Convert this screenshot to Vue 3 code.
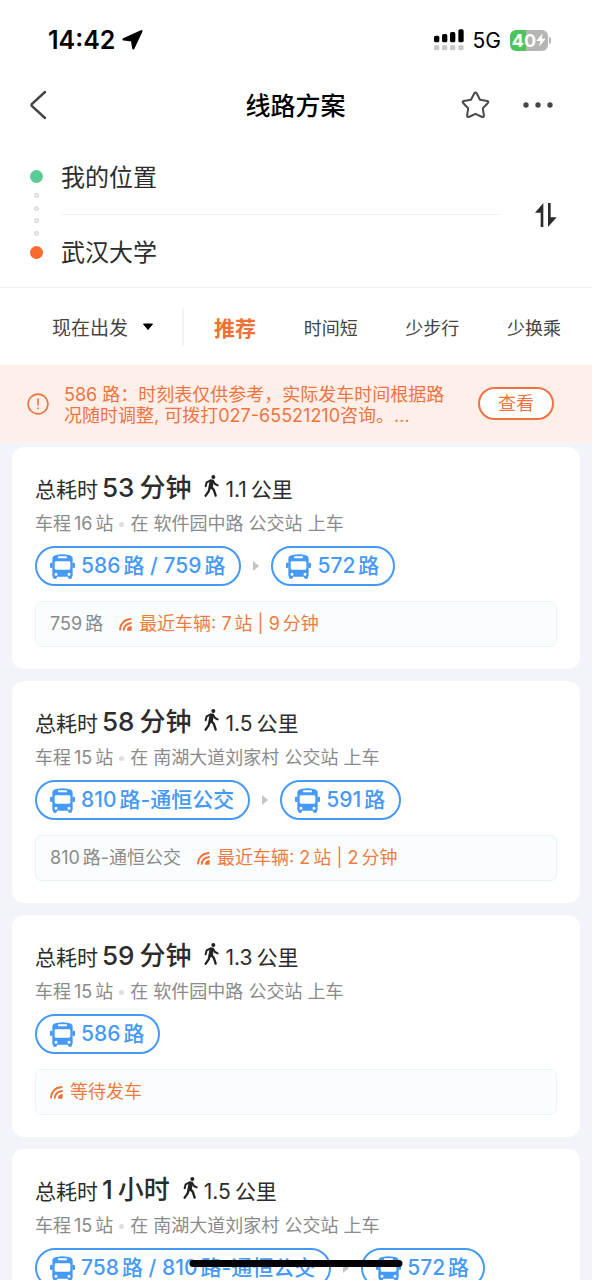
<script setup>
import { ref, h } from 'vue'

const origin = ref('我的位置')
const destination = ref('武汉大学')
const departure = ref('now')
const activeTab = ref('推荐')
const tabs = ['推荐', '时间短', '少步行', '少换乘']

const plans = [
  {
    duration: '53分钟', walk: '1.1公里', stops: '车程16站', board: '在 软件园中路 公交站 上车',
    lines: ['586路 / 759路', '572路'], next: '759路', status: '最近车辆: 7站 | 9分钟'
  },
  {
    duration: '58分钟', walk: '1.5公里', stops: '车程15站', board: '在 南湖大道刘家村 公交站 上车',
    lines: ['810路-通恒公交', '591路'], next: '810路-通恒公交', status: '最近车辆: 2站 | 2分钟'
  },
  {
    duration: '59分钟', walk: '1.3公里', stops: '车程15站', board: '在 软件园中路 公交站 上车',
    lines: ['586路'], next: '', status: '等待发车'
  },
  {
    duration: '1小时', walk: '1.5公里', stops: '车程15站', board: '在 南湖大道刘家村 公交站 上车',
    lines: ['758路 / 810路-通恒公交', '572路'], next: '', status: ''
  }
]

function swap() {
  const from = origin.value
  origin.value = destination.value
  destination.value = from
}

// Sets numerals apart from the Chinese characters next to them.
const Mixed = (props) =>
  h('span', { class: 'mixed' }, props.text.split(/([0-9.]+)/).filter(Boolean).map((part, i, all) => {
    const isNumber = /^[0-9.]+$/.test(part)
    const after = isNumber && /^[\u4e00-\u9fff]/.test(all[i + 1] || '')
    const before = isNumber && /[\u4e00-\u9fff]$/.test(all[i - 1] || '')
    return h('span', { class: { 'gap-after': after, 'gap-before': before } }, part)
  }))
Mixed.props = ['text']
</script>

<template>
  <div class="screen">
    <header class="status">
      <div class="clock">
        <span>14:42</span>
        <svg width="21" height="20" viewBox="0 0 63 60" aria-hidden="true">
          <path d="M58 4 34 55 30 31 5 28Z" stroke="#000" stroke-width="7" stroke-linejoin="round" />
        </svg>
      </div>
      <div class="signals">
        <svg width="30" height="22" viewBox="0 0 90 66" aria-hidden="true">
          <rect x="0" y="20" width="16" height="20" rx="5" /><rect x="24" y="15" width="16" height="25" rx="5" />
          <rect x="48" y="9" width="16" height="31" rx="5" /><rect x="73" y="1" width="16" height="39" rx="5" />
          <g fill="#c9c9c9">
            <rect x="0" y="48" width="16" height="16" rx="5" /><rect x="24" y="48" width="16" height="16" rx="5" />
            <rect x="48" y="48" width="16" height="16" rx="5" /><rect x="73" y="48" width="16" height="16" rx="5" />
          </g>
        </svg>
        <span class="network">5G</span>
        <div class="battery">
          <span>40</span>
          <svg width="10" height="14" viewBox="0 0 30 42" aria-hidden="true"><path fill="#fff" d="M20 1 1 24H13L9 41 29 17H17Z" /></svg>
        </div>
      </div>
    </header>

    <nav class="nav">
      <button class="icon-btn back" aria-label="返回">
        <svg width="18" height="30" viewBox="0 0 18 30"><path d="M16 2 2.8 14Q2 15 2.8 16L16 28" fill="none" stroke="#444" stroke-width="2.4" stroke-linecap="round" /></svg>
      </button>
      <h1>线路方案</h1>
      <div class="nav-actions">
        <button class="icon-btn" aria-label="收藏">
          <svg width="29" height="28" viewBox="0 0 29 28"><path d="M13.3 2.3Q14.5.7 15.7 2.3L19 8.8 26.2 10Q28 10.5 26.9 12L21.8 17.2 22.9 24.7Q22.9 26.5 21.2 26L14.5 22.8 7.8 26Q6.1 26.5 6.1 24.7L7.2 17.2 2.1 12Q1 10.5 2.8 10L10 8.8Z" fill="none" stroke="#4a4a4a" stroke-width="2" stroke-linejoin="round" /></svg>
        </button>
        <button class="icon-btn" aria-label="更多">
          <svg width="30" height="8" viewBox="0 0 30 8" fill="#484848"><circle cx="3" cy="4" r="2.7" /><circle cx="15" cy="4" r="2.7" /><circle cx="27" cy="4" r="2.7" /></svg>
        </button>
      </div>
    </nav>

    <form class="route" @submit.prevent>
      <div class="rail" aria-hidden="true">
        <i class="end start"></i><i></i><i></i><i></i><i></i><i class="end finish"></i>
      </div>
      <div class="fields">
        <input v-model="origin" aria-label="起点" />
        <hr />
        <input v-model="destination" aria-label="终点" />
      </div>
      <button type="button" class="icon-btn" aria-label="交换起点和终点" @click="swap">
        <svg width="22" height="24" viewBox="0 0 66 72" fill="#2c2c2c"><path d="M25 0V72H17V29H0Z" /><path d="M39 0H47V43H65L39 72Z" /></svg>
      </button>
    </form>

    <div class="filters">
      <label class="depart">
        <select v-model="departure" aria-label="出发时间">
          <option value="now">现在出发</option>
          <option value="later">稍后出发</option>
        </select>
        <svg width="12" height="8" viewBox="0 0 12 8" aria-hidden="true"><path d="M1.5 1h9L6 6.5Z" stroke="#000" stroke-linejoin="round" /></svg>
      </label>
      <div class="tabs" role="tablist">
        <button v-for="tab in tabs" :key="tab" role="tab" :aria-selected="tab === activeTab"
          :class="{ active: tab === activeTab }" @click="activeTab = tab">{{ tab }}</button>
      </div>
    </div>

    <section class="notice">
      <svg width="22" height="22" viewBox="0 0 22 22" fill="none" stroke="#ef7442" stroke-width="1.6" aria-hidden="true">
        <circle cx="11" cy="11" r="9.900" /><path d="M11 5.5V12.5M11 14.5V16.2" />
      </svg>
      <p>586 路：时刻表仅供参考，实际发车时间根据路况随时调整, 可拨打027-65521210咨询。...</p>
      <button>查看</button>
    </section>

    <main class="plans">
      <article v-for="(plan, i) in plans" :key="i" class="card">
        <h2>
          <span>总耗时</span>
          <Mixed class="duration" :text="plan.duration" />
          <svg class="walker" width="15" height="22" viewBox="0 0 45 66" fill="none" stroke="#222" stroke-linecap="round" stroke-linejoin="round" aria-hidden="true">
            <circle cx="28" cy="6" r="6" fill="#222" stroke="none" />
            <path d="M23 20 20 36" stroke-width="13" />
            <path d="M20 16 8 22 5 34M27 17 33 27 41 31" stroke-width="6" />
            <path d="M17 38 14 49 5 62M23 37 30 46 35 62" stroke-width="7" />
          </svg>
          <Mixed class="distance" :text="plan.walk" />
        </h2>
        <p class="summary"><Mixed :text="plan.stops" /><i></i><span>{{ plan.board }}</span></p>
        <div class="lines">
          <template v-for="(line, n) in plan.lines" :key="line">
            <svg v-if="n" class="arrow" width="8" height="12" viewBox="0 0 8 12" aria-hidden="true"><path d="M1 1 7 6 1 11Z" fill="#c4c4c4" /></svg>
            <button class="pill">
              <svg width="25" height="25" viewBox="0 0 75 75" fill="#459af7" aria-hidden="true">
                <path fill-rule="evenodd" d="M19 3Q37-2 56 3 68 5 68 14V64Q68 68 66 68V70Q66 75 60 75 54 75 54 70V68H21V70Q21 75 15 75 9 75 9 70V68Q7 68 7 64V14Q7 5 19 3ZM26 7Q24 7 24 10 24 13 26 13H49Q51 13 51 10 51 7 49 7ZM18 22Q14 22 14 26V43Q14 47 18 47H57Q61 47 61 43V26Q61 22 57 22ZM18 56A4.500 4.500 0 1 0 18 65 4.500 4.500 0 1 0 18 56ZM57 56A4.500 4.500 0 1 0 57 65 4.500 4.500 0 1 0 57 56Z" />
                <rect x="0" y="26" width="8" height="16" rx="3" /><rect x="67" y="26" width="8" height="16" rx="3" />
              </svg>
              <Mixed :text="line" />
            </button>
          </template>
        </div>
        <div v-if="plan.status" class="live">
          <Mixed v-if="plan.next" class="next" :text="plan.next" />
          <svg width="13" height="13" viewBox="0 0 39 39" fill="none" stroke="#ef7135" stroke-width="5.500" stroke-linecap="round" aria-hidden="true">
            <path d="M3 35Q5 6 35 3M14 36Q16 18 36 15" /><path d="M26 36Q26 27 36 26V36Z" fill="#ef7135" stroke-width="4" stroke-linejoin="round" />
          </svg>
          <Mixed :text="plan.status" />
        </div>
      </article>
    </main>
    <div class="home-bar"></div>
  </div>
</template>

<style>
body {
  margin: 0;
}
</style>

<style scoped>
.screen {
  height: 100vh;
  display: flex;
  flex-direction: column;
  overflow: hidden;
  position: relative;
  background: #fff;
  color: #2c2c2c;
  font-family: Inter, "Noto Sans CJK SC", sans-serif;
}
button, input, select {
  font: inherit;
  color: inherit;
  background: none;
  border: 0;
  padding: 0;
  margin: 0;
}
button {
  cursor: pointer;
}
svg {
  display: block;
  flex: none;
}
h1, h2, p {
  margin: 0;
}
.screen :deep(.gap-after) {
  margin-right: 3px;
}
.screen :deep(.gap-before) {
  margin-left: 3px;
}
.status {
  flex: none;
  height: 80px;
  display: flex;
  align-items: center;
  justify-content: space-between;
  padding: 0 41px 0 48px;
  color: #000;
}
.clock {
  display: flex;
  align-items: center;
  gap: 7px;
  font-size: 25px;
  font-weight: 600;
}
.signals {
  display: flex;
  align-items: center;
  gap: 9px;
}
.network {
  font-size: 21px;
  font-weight: 400;
}
.battery {
  position: relative;
  display: flex;
  align-items: center;
  justify-content: center;
  width: 38px;
  height: 21px;
  margin-right: 3px;
  border-radius: 6px;
  background: linear-gradient(90deg, #4ec559 42%, #b5b5b5 42%);
  color: #fff;
  font-size: 18px;
  font-weight: 700;
}
.battery::after {
  content: "";
  position: absolute;
  right: -3px;
  top: 7px;
  width: 2px;
  height: 7px;
  border-radius: 0 2px 2px 0;
  background: #b5b5b5;
}
.nav {
  flex: none;
  height: 50px;
  display: grid;
  grid-template-columns: 1fr auto 1fr;
  align-items: center;
  padding: 0 39px 0 29px;
}
.back {
  justify-self: start;
}
.nav h1 {
  color: #000;
  font-size: 25px;
  font-weight: 500;
  line-height: 36px;
  padding: 2px 0 0 9px;
}
.nav-actions {
  display: flex;
  align-items: center;
  justify-content: flex-end;
  gap: 33px;
}
.route {
  flex: none;
  display: flex;
  align-items: center;
  padding: 20px 35px 8px 30px;
  border-bottom: 1px solid #f0f0f0;
}
.rail {
  display: flex;
  flex-direction: column;
  align-items: center;
  justify-content: space-between;
  height: 89px;
  margin-right: 18px;
}
.rail i {
  box-sizing: border-box;
  width: 5px;
  height: 5px;
  border: 1px solid #d2d2d2;
  border-radius: 50%;
  background: #ececec;
}
.rail .end {
  width: 13px;
  height: 13px;
  border: 0;
}
.rail .start {
  margin-bottom: 3px;
  background: #5acb95;
}
.rail .finish {
  margin-top: 3px;
  background: #fb6a2e;
}
.fields {
  flex: 1;
  min-width: 0;
  margin-right: 35px;
}
.fields input {
  box-sizing: border-box;
  display: block;
  width: 100%;
  height: 54px;
  padding-bottom: 4px;
  font-size: 24px;
  outline: 0;
}
.fields hr {
  height: 1px;
  margin: 10px 0;
  border: 0;
  background: #f2f2f2;
}
.filters {
  flex: none;
  height: 77px;
  display: flex;
  align-items: center;
  color: #444;
}
.depart {
  display: flex;
  align-items: center;
  gap: 13px;
  padding: 0 28px 0 52px;
  height: 38px;
  border-right: 2px solid #f2f2f4;
}
.depart select {
  appearance: none;
  padding-top: 4px;
  font-size: 19px;
  line-height: 30px;
}
.tabs {
  flex: 1;
  display: flex;
  align-items: center;
  justify-content: space-between;
  padding: 0 31px 0 30px;
  font-size: 18px;
}
.tabs .active {
  color: #ef7135;
  font-size: 21px;
  font-weight: 700;
}
.notice {
  flex: none;
  display: flex;
  align-items: center;
  height: 77px;
  padding: 0 38px 0 27px;
  background: #ffefe9;
  color: #ef7442;
}
.notice p {
  flex: 1;
  margin: 0 24px 0 15px;
  padding-top: 2px;
  font-size: 18px;
  line-height: 21px;
}
.notice button {
  box-sizing: border-box;
  width: 76px;
  height: 33px;
  border: 2px solid #ef7442;
  border-radius: 17px;
  background: #fff;
  font-size: 18px;
  line-height: 28px;
}
.plans {
  flex: 1;
  min-height: 0;
  overflow: hidden auto;
  scrollbar-width: none;
  display: flex;
  flex-direction: column;
  gap: 12px;
  padding: 5px 12px 0;
  background: #f3f4f9;
}
.card {
  flex: none;
  padding: 23px 23px 22px;
  border-radius: 12px;
  background: #fff;
}
.card h2 {
  display: flex;
  align-items: baseline;
  height: 36px;
  font-size: 21px;
  font-weight: 400;
  line-height: 36px;
}
.duration {
  margin: 0 13px 0 4px;
  font-size: 26px;
  font-weight: 500;
}
.duration :deep(.gap-after) {
  margin-right: 5px;
}
.walker {
  margin-right: 6px;
}
.distance :deep(.gap-after) {
  margin-right: 4px;
}
.summary {
  display: flex;
  align-items: center;
  margin: 6px 0 10px;
  color: #8a8a8a;
  font-size: 18px;
  line-height: 24px;
}
.summary i {
  width: 5px;
  height: 5px;
  margin: 0 6px;
  border-radius: 50%;
  background: #dedede;
}
.lines {
  display: flex;
  align-items: center;
}
.arrow {
  margin: 0 11px;
}
.pill {
  box-sizing: border-box;
  display: flex;
  align-items: center;
  gap: 6px;
  height: 40px;
  padding: 0 14px 0 13px;
  border: 2px solid #459af7;
  border-radius: 20px;
  color: #459af7;
  font-size: 21px;
  font-weight: 500;
  line-height: 30px;
  white-space: nowrap;
}
.live {
  box-sizing: border-box;
  display: flex;
  align-items: center;
  gap: 7px;
  height: 46px;
  margin-top: 15px;
  padding: 0 14px;
  border: 1px solid #e9f5f5;
  border-radius: 6px;
  background: #f9fdfe;
  color: #f07b41;
  font-size: 18px;
  line-height: 26px;
}
.next {
  margin-right: 9px;
  color: #8a8a8a;
}
.home-bar {
  position: absolute;
  bottom: 13px;
  left: 50%;
  width: 36%;
  height: 7px;
  border-radius: 4px;
  background: #000;
  transform: translateX(-50%);
}
</style>
